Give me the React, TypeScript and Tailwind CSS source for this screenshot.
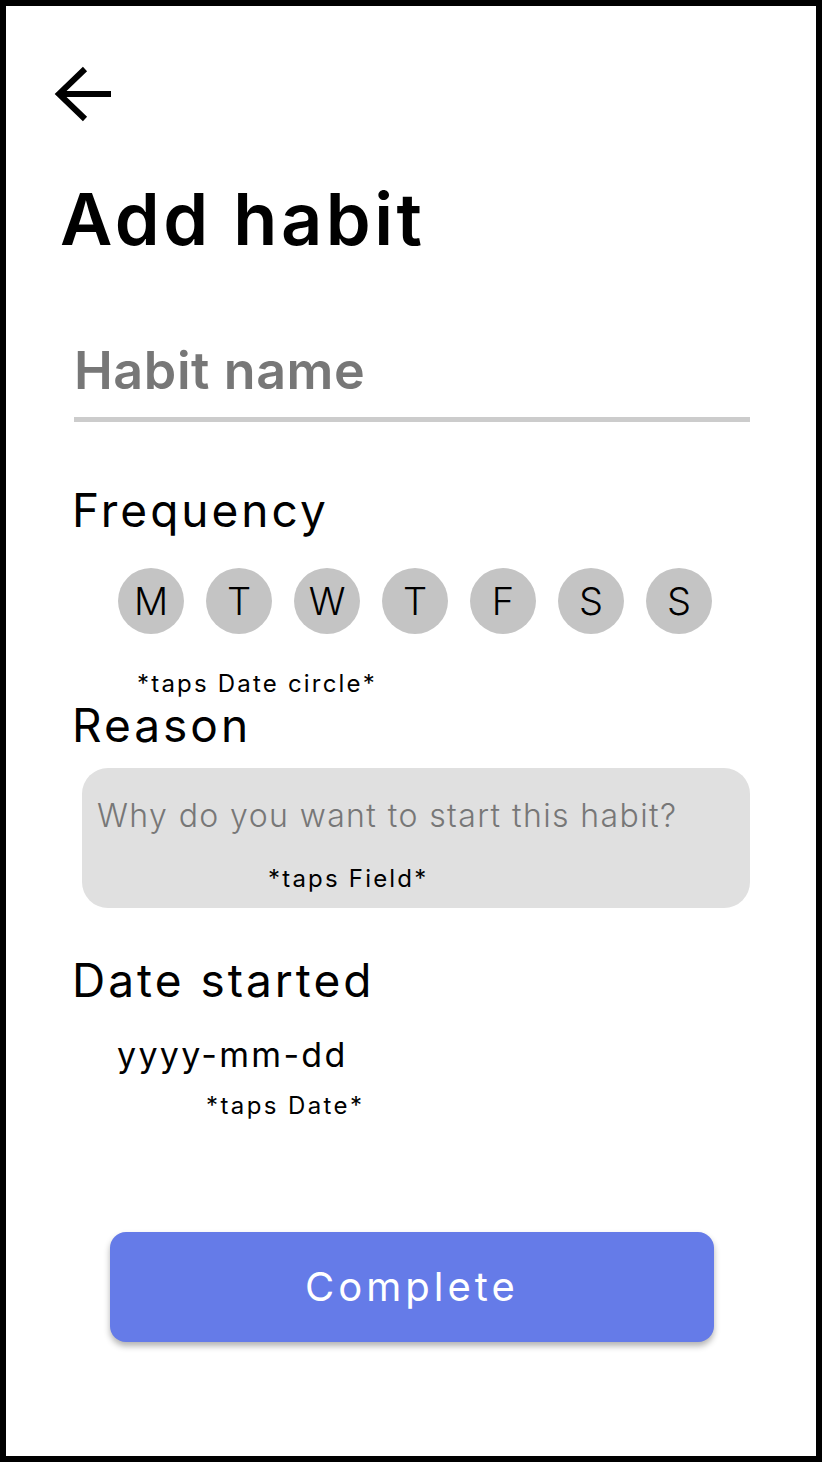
export default function App() {
  const days = ["M", "T", "W", "T", "F", "S", "S"];
  return (
    <div className="w-[822px] h-[1462px] border-[6px] border-black bg-white font-['Inter','Liberation_Sans',sans-serif] text-black">
      <div className="flex flex-col">
        <button className="ml-[48px] mt-[60px] w-[60px] h-[56px]">
          <svg width="60" height="56" viewBox="0 0 60 56" fill="none">
            <path d="M6 28 H57" stroke="black" strokeWidth="6" />
            <path d="M31 3 L5 28 L31 53" stroke="black" strokeWidth="6" strokeLinejoin="miter" />
          </svg>
        </button>

        <h1 className="ml-[54px] mt-[61px] text-[72px] leading-[72px] font-semibold tracking-[3.5px]">Add habit</h1>

        <div className="ml-[68px] mt-[90px] w-[676px] pb-[20px] border-b-[5px] border-[#cccccc]">
          <span className="block text-[52px] leading-[52px] font-semibold text-[#777777] tracking-[0.6px]">Habit name</span>
        </div>

        <h2 className="ml-[66px] mt-[65px] text-[46px] leading-[46px] tracking-[3px]">Frequency</h2>

        <div className="ml-[112px] mt-[35px] flex gap-[22px]">
          {days.map((d, i) => (
            <div
              key={i}
              className="w-[66px] h-[66px] rounded-full bg-[#c4c4c4] flex items-center justify-center text-[38px] leading-none font-light"
            >
              {d}
            </div>
          ))}
        </div>

        <p className="ml-[131px] mt-[38px] text-[24px] leading-[24px] tracking-[2.2px]">*taps Date circle*</p>

        <h2 className="ml-[66px] mt-[6px] text-[46px] leading-[46px] tracking-[3px]">Reason</h2>

        <div className="ml-[76px] mt-[20px] w-[668px] h-[140px] rounded-[26px] bg-[#e0e0e0] pl-[15px] pt-[32px]">
          <p className="text-[32px] leading-[32px] font-light text-[#777777] tracking-[1.4px]">Why do you want to start this habit?</p>
          <p className="ml-[171px] mt-[35px] text-[24px] leading-[24px] tracking-[2.2px]">*taps Field*</p>
        </div>

        <h2 className="ml-[66px] mt-[49px] text-[46px] leading-[46px] tracking-[3px]">Date started</h2>

        <p className="ml-[111px] mt-[35px] text-[34px] leading-[34px] tracking-[2.3px]">yyyy-mm-dd</p>
        <p className="ml-[200px] mt-[22px] text-[24px] leading-[24px] tracking-[2.4px]">*taps Date*</p>

        <button className="ml-[104px] mt-[114px] w-[604px] h-[110px] rounded-[16px] bg-[#657be8] shadow-[0_4px_6px_rgba(0,0,0,0.3)] text-white text-[40px] leading-none tracking-[4px]">
          Complete
        </button>
      </div>
    </div>
  );
}
